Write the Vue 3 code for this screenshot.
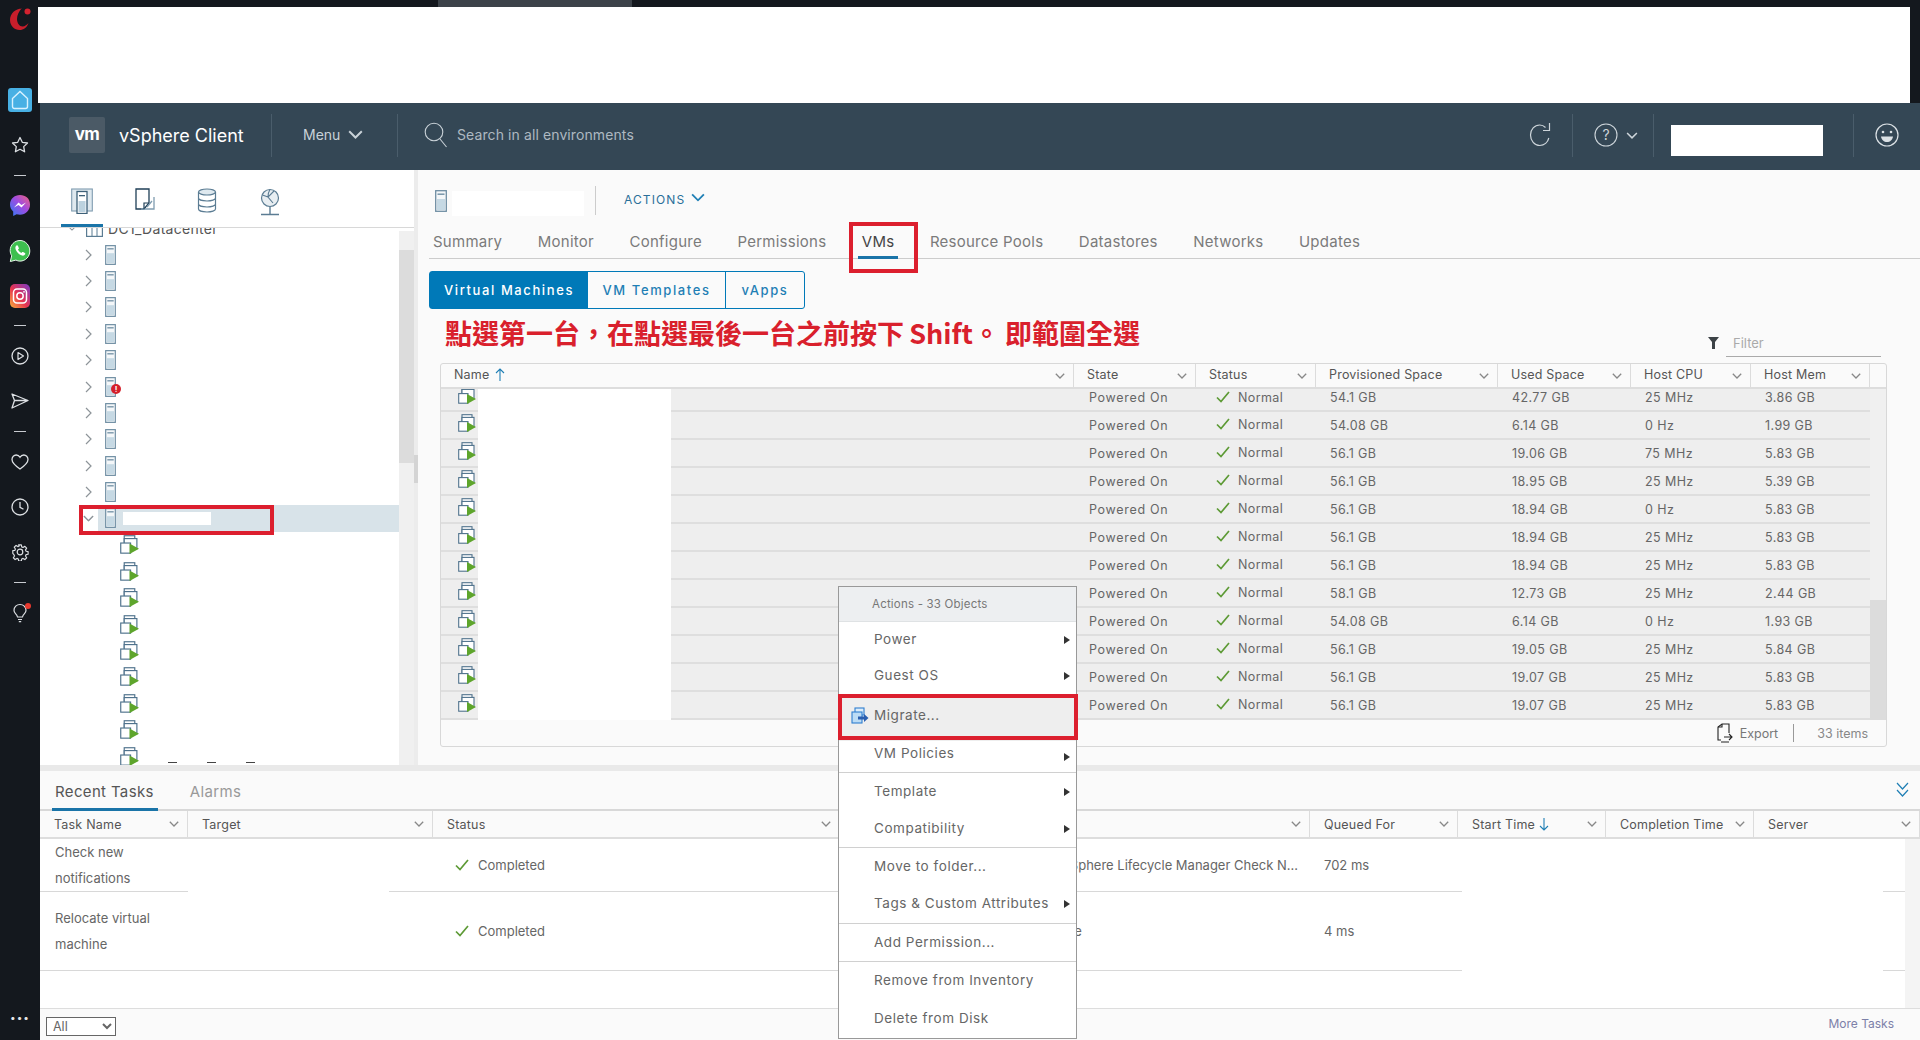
<template>
  <div class="screen">
    <!-- shared icons -->
    <svg class="defs" width="0" height="0">
      <symbol id="host" viewBox="0 0 12 22">
        <rect x="0.7" y="0.7" width="10.6" height="20.6" fill="#f4f7f9" stroke="#6f8ea3" stroke-width="1.3" />
        <rect x="2" y="9" width="8" height="11" fill="#c6d9e4" />
        <rect x="2.5" y="3.5" width="7" height="1.4" fill="#6f8ea3" />
      </symbol>
      <symbol id="vm" viewBox="0 0 18 18">
        <rect x="4" y="0.7" width="10" height="6" fill="#fff" stroke="#4f728c" stroke-width="1.1" />
        <rect x="4" y="3.4" width="12" height="9.6" fill="#fff" stroke="#4f728c" stroke-width="1.1" />
        <rect x="0.7" y="7.6" width="9.3" height="9.6" fill="#fff" stroke="#4f728c" stroke-width="1.1" />
        <path d="M9 8l9 5-9 5z" fill="#5ea52c" />
      </symbol>
      <symbol id="chev" viewBox="0 0 10 6">
        <path d="M.8.8L5 5l4.2-4.2" fill="none" stroke="currentColor" stroke-width="1.3" />
      </symbol>
      <symbol id="check" viewBox="0 0 14 12">
        <path d="M1 6.500l4 4L13 1" fill="none" stroke="#5d9a35" stroke-width="1.700" />
      </symbol>
    </svg>

    <div class="tabstrip"><span class="browser-tab"></span></div>

    <div class="shell">
      <aside class="sidebar">
        <div class="opera">
          <svg width="22" height="24" viewBox="0 0 22 24">
            <path d="M13 1.500C6.500 1.500 1 6.500 1 13c0 6 4.500 10 9.500 10 4 0 7.500-2.500 9-7-1.500 1.500-3.500 3.500-6 3.500-3 0-5.500-3.500-5.500-7.500 0-4 2-8 5-11z" fill="#c81e2b" />
            <circle cx="18.500" cy="4.500" r="3" fill="#d3222f" />
          </svg>
        </div>
        <div class="side-item">
          <span class="home-tile">
            <svg width="18" height="20" viewBox="0 0 18 20"><path d="M1.500 8.500L9 1.500l7.500 7v8a2 2 0 0 1-2 2h-11a2 2 0 0 1-2-2z" fill="none" stroke="#d9f2ff" stroke-width="1.400" /></svg>
          </span>
        </div>
        <div class="side-item">
          <svg width="18" height="18" viewBox="0 0 18 18"><path d="M9 1.500l2.300 4.800 5.200.7-3.800 3.600.9 5.200L9 13.300l-4.600 2.500.9-5.200L1.500 7l5.200-.7z" fill="none" stroke="#dcdfe3" stroke-width="1.300" stroke-linejoin="round" /></svg>
        </div>
        <div class="side-dash"></div>
        <div class="side-item">
          <svg width="22" height="23" viewBox="0 0 22 23">
            <defs><linearGradient id="msg" x1="0" y1="1" x2="1" y2="0"><stop offset="0" stop-color="#2f7bf6" /><stop offset=".55" stop-color="#a04be0" /><stop offset="1" stop-color="#f0647a" /></linearGradient></defs>
            <path d="M11 1C5.300 1 1 5.100 1 10.500c0 2.900 1.200 5.300 3.200 7V22l3.400-1.800c1 .3 2.200.5 3.400.5 5.700 0 10-4.200 10-10.200S16.700 1 11 1z" fill="url(#msg)" />
            <path d="M5 13.500l4.500-5 3 2.500 4.500-2.500-4.500 5-3-2.500z" fill="#fff" />
          </svg>
        </div>
        <div class="side-item">
          <svg width="22" height="24" viewBox="0 0 22 24">
            <path d="M11 1.500C5.500 1.500 1.200 6 1.200 11.500c0 2 .6 3.800 1.500 5.300L1.300 22.500l5.600-1.400c1.300.7 2.700 1 4.100 1 5.500 0 9.800-4.500 9.800-10.100S16.500 1.500 11 1.500z" fill="#3ec04f" stroke="#e8f7ea" stroke-width="1" />
            <path d="M7.500 6.500c-1.200 1-1.500 2.500-.6 4.400 1.200 2.500 3 4.300 5.500 5.400 1.700.7 3 .3 3.800-1 .3-.6.200-1-.3-1.300l-1.800-1c-.4-.2-.8-.1-1.100.3l-.6.700c-1.600-.7-2.800-1.900-3.500-3.400l.7-.6c.3-.3.4-.7.200-1.100l-.8-1.900c-.3-.6-1-.8-1.500-.5z" fill="#fff" />
          </svg>
        </div>
        <div class="side-item">
          <svg width="20" height="24" viewBox="0 0 20 24">
            <defs><linearGradient id="ig" x1="0" y1="1" x2="1" y2="0"><stop offset="0" stop-color="#f8b13c" /><stop offset=".45" stop-color="#e8344f" /><stop offset="1" stop-color="#7a3bc8" /></linearGradient></defs>
            <rect x="0" y="0" width="20" height="24" rx="5" fill="url(#ig)" />
            <rect x="3.500" y="5" width="13" height="14" rx="3.500" fill="none" stroke="#fff" stroke-width="1.500" />
            <circle cx="10" cy="12" r="3.200" fill="none" stroke="#fff" stroke-width="1.500" />
            <circle cx="14" cy="7.800" r=".9" fill="#fff" />
          </svg>
        </div>
        <div class="side-dash tight"></div>
        <div class="side-item">
          <svg width="18" height="20" viewBox="0 0 18 20"><circle cx="9" cy="10" r="8" fill="none" stroke="#dcdfe3" stroke-width="1.300" /><path d="M7 6.500l5.500 3.500L7 13.500z" fill="none" stroke="#dcdfe3" stroke-width="1.200" stroke-linejoin="round" /></svg>
        </div>
        <div class="side-item">
          <svg width="18" height="16" viewBox="0 0 18 16"><path d="M1 1l16 6.500L1 15l2.500-7.500zM3.500 7.500H17" fill="none" stroke="#dcdfe3" stroke-width="1.300" stroke-linejoin="round" /></svg>
        </div>
        <div class="side-dash"></div>
        <div class="side-item">
          <svg width="18" height="16" viewBox="0 0 18 16"><path d="M9 15C4 11.500 1 8.800 1 5.500 1 3 3 1 5.200 1 6.800 1 8.200 1.900 9 3.300 9.800 1.900 11.200 1 12.800 1 15 1 17 3 17 5.500c0 3.300-3 6-8 9.500z" fill="none" stroke="#dcdfe3" stroke-width="1.300" /></svg>
        </div>
        <div class="side-item">
          <svg width="18" height="18" viewBox="0 0 18 18"><circle cx="9" cy="9" r="8" fill="none" stroke="#dcdfe3" stroke-width="1.300" /><path d="M9 4v5.300l3.500 2" fill="none" stroke="#dcdfe3" stroke-width="1.300" /></svg>
        </div>
        <div class="side-item">
          <svg width="18" height="18" viewBox="0 0 18 18"><circle cx="9" cy="9" r="2.800" fill="none" stroke="#dcdfe3" stroke-width="1.200" /><path d="M7.500 1h3l.4 2.300 1.500.7 2-1.300 2 2-1.300 2 .7 1.500 2.200.3v3l-2.200.4-.7 1.500 1.300 2-2 2-2-1.300-1.500.7-.4 2.200h-3l-.4-2.200-1.500-.7-2 1.300-2-2 1.300-2-.7-1.500L1 10.500v-3l2.200-.3.700-1.500-1.300-2 2-2 2 1.300 1.500-.7z" transform="translate(.9 .9) scale(.9)" fill="none" stroke="#dcdfe3" stroke-width="1.300" stroke-linejoin="round" /></svg>
        </div>
        <div class="side-dash"></div>
        <div class="side-item bulb">
          <svg width="16" height="20" viewBox="0 0 16 20"><path d="M5.500 14c-.3-1.500-1-2.300-2-3.300C2.500 9.700 2 8.600 2 7.300 2 4 4.600 1.500 8 1.500s6 2.500 6 5.800c0 1.300-.5 2.400-1.500 3.400-1 1-1.700 1.800-2 3.300zM6 16.500h4M6.800 18.700h2.400" fill="none" stroke="#dcdfe3" stroke-width="1.200" /></svg>
          <span class="bulb-dot"></span>
        </div>
        <div class="side-dots">•••</div>
      </aside>

      <main class="main">
        <div class="banner"></div>

        <header class="topbar">
          <span class="vm-logo">vm</span>
          <span class="product">vSphere Client</span>
          <span class="top-div first"></span>
          <span class="menu-btn">Menu
            <svg width="15" height="9" viewBox="0 0 10 6"><use href="#chev" /></svg>
          </span>
          <span class="top-div"></span>
          <svg class="search-icon" width="24" height="26" viewBox="0 0 24 26"><circle cx="10" cy="10" r="8.800" fill="none" stroke="#c9d2d8" stroke-width="1.100" /><path d="M16 17l6.500 8" stroke="#c9d2d8" stroke-width="1.100" /></svg>
          <span class="search-text">Search in all environments</span>
          <svg class="refresh" width="24" height="26" viewBox="0 0 24 26"><path d="M17.500 5.500C15.800 3.800 14 3 11.800 3 6.500 3 2.500 7.500 2.500 13s4 10.500 9.300 10.500c4.500 0 8-3.200 9-7.500M21.500 1v7.500h-6.500" fill="none" stroke="#cdd5da" stroke-width="1.200" /></svg>
          <span class="top-div"></span>
          <svg class="help" width="24" height="24" viewBox="0 0 24 24"><circle cx="12" cy="12" r="11" fill="none" stroke="#cdd5da" stroke-width="1.100" /><text x="12" y="17" text-anchor="middle" class="help-q">?</text></svg>
          <svg class="help-chev" width="12" height="7" viewBox="0 0 10 6"><use href="#chev" /></svg>
          <span class="top-div"></span>
          <span class="user-mask"></span>
          <span class="top-div"></span>
          <svg class="smiley" width="24" height="24" viewBox="0 0 24 24"><circle cx="12" cy="12" r="11" fill="none" stroke="#dbe1e5" stroke-width="1.200" /><circle cx="8" cy="9" r="1.300" fill="#dbe1e5" /><circle cx="16" cy="9" r="1.300" fill="#dbe1e5" /><path d="M6 13.500h12c-.5 3.500-3 5.500-6 5.500s-5.500-2-6-5.500z" fill="#dbe1e5" /></svg>
        </header>

        <div class="work">
          <section class="tree-panel">
            <nav class="tree-tabs">
              <span class="tree-tab active">
                <svg width="22" height="26" viewBox="0 0 22 26"><rect x=".7" y="1" width="20.600" height="22" fill="#dfe9ef" stroke="#7f9cb0" stroke-width="1.100" /><rect x="6" y="3.500" width="10" height="22" fill="#fff" stroke="#3d6078" stroke-width="1.300" /><rect x="7.500" y="13" width="7" height="11" fill="#bcd2df" /><rect x="8" y="7" width="6" height="1.300" fill="#3d6078" /></svg>
              </span>
              <span class="tree-tab">
                <svg width="20" height="24" viewBox="0 0 20 24"><path d="M1 1h13v14l-5 6H1z" fill="#fff" stroke="#1f3f57" stroke-width="1.300" /><path d="M6 21h13V9" fill="none" stroke="#7f9cb0" stroke-width="1.300" /><path d="M9 21v-6h5" fill="none" stroke="#1f3f57" stroke-width="1.200" /><path d="M12 19l5-6" stroke="#7f9cb0" stroke-width="1.300" /></svg>
              </span>
              <span class="tree-tab">
                <svg width="20" height="25" viewBox="0 0 20 25"><ellipse cx="10" cy="4" rx="8.500" ry="3" fill="#dfe9ef" stroke="#5b7c93" stroke-width="1.200" /><path d="M1.500 4v17c0 1.700 3.800 3 8.500 3s8.500-1.300 8.500-3V4M1.500 10c0 1.700 3.800 3 8.500 3s8.500-1.300 8.500-3M1.500 16c0 1.700 3.800 3 8.500 3s8.500-1.300 8.500-3" fill="none" stroke="#5b7c93" stroke-width="1.200" /></svg>
              </span>
              <span class="tree-tab">
                <svg width="20" height="28" viewBox="0 0 20 28"><circle cx="10" cy="10" r="8.500" fill="#e8eef2" stroke="#5b7c93" stroke-width="1.200" /><path d="M14 3l-6 6 5 6M8 9L2.500 7M10 1.500c-2 3-2 6-2 7.500" fill="none" stroke="#5b7c93" stroke-width="1.100" /><path d="M10 18.500V26M1 26.500h18" stroke="#5b7c93" stroke-width="1.400" /></svg>
              </span>
            </nav>
            <div class="tree-body">
              <div class="tree-list">
                <div class="tree-row">
                  <svg class="chev-open small" width="8" height="5" viewBox="0 0 10 6"><use href="#chev" /></svg>
                  <svg class="dc-icon" width="17" height="18" viewBox="0 0 17 18"><rect x=".6" y=".6" width="15.800" height="16.800" fill="#fff" stroke="#5b7c93" stroke-width="1.200" /><path d="M6 1v16M11 1v16" stroke="#5b7c93" stroke-width="1" /></svg>
                  <span class="dc-name">DC1_Datacenter</span>
                </div>
                <div v-for="h in hosts" :key="h" class="tree-row">
                  <svg class="chev-closed" width="7" height="12" viewBox="0 0 7 12"><path d="M1 1l5 5-5 5" fill="none" stroke="#8d9499" stroke-width="1.200" /></svg>
                  <span class="host-wrap">
                    <svg width="11" height="20"><use href="#host" /></svg>
                    <span v-if="h === 6" class="err">!</span>
                  </span>
                </div>
                <div class="tree-row selected">
                  <svg class="chev-open" width="11" height="7" viewBox="0 0 10 6"><use href="#chev" /></svg>
                  <span class="host-wrap"><svg width="11" height="20"><use href="#host" /></svg></span>
                  <span class="sel-mask"></span>
                  <span class="red-box tree-mark"></span>
                </div>
                <div v-for="v in 9" :key="v" class="tree-row vm-row">
                  <svg width="19" height="19"><use href="#vm" /></svg>
                </div>
              </div>
              <!-- tops of the next, cut off row -->
              <div class="cut-row"><i></i><i></i><i></i></div>
              <div class="tree-scroll"><span class="tree-thumb"></span></div>
            </div>
          </section>

          <div class="vsplit"><span class="vsplit-grip"></span></div>

          <section class="content">
            <div class="obj-head">
              <svg class="obj-icon" width="12" height="24"><use href="#host" /></svg>
              <span class="obj-mask"></span>
              <span class="obj-div"></span>
              <span class="actions">ACTIONS</span>
              <svg class="actions-chev" width="14" height="9" viewBox="0 0 10 6"><use href="#chev" /></svg>
            </div>

            <nav class="tabs">
              <span v-for="t in tabs" :key="t" class="tab" :class="{ active: t === 'VMs' }">{{ t }}</span>
              <span class="red-box tab-mark"></span>
            </nav>

            <div class="toggle">
              <span class="toggle-btn on">Virtual Machines</span>
              <span class="toggle-btn tpl">VM Templates</span>
              <span class="toggle-btn app">vApps</span>
            </div>

            <div class="note-row">
              <span class="note" lang="zh-TW">點選第一台，在點選最後一台之前按下 Shift。 即範圍全選</span>
              <span class="filter">
                <svg class="funnel" width="11" height="12" viewBox="0 0 11 12"><path d="M0 0h11L7 5v7H4V5z" fill="#3c4246" /></svg>
                <span class="filter-box">Filter</span>
              </span>
            </div>

            <div class="grid">
              <div class="grid-head">
                <div class="gh name">Name
                  <svg class="sort" width="10" height="13" viewBox="0 0 10 13"><path d="M5 13V1M1 5l4-4 4 4" fill="none" stroke="#1f7fb5" stroke-width="1.100" /></svg>
                  <svg class="gh-chev" width="10" height="6"><use href="#chev" /></svg>
                </div>
                <div v-for="c in columns" :key="c" class="gh">{{ c }}
                  <svg class="gh-chev" width="10" height="6"><use href="#chev" /></svg>
                </div>
              </div>
              <div class="grid-body">
                <div class="rows">
                  <div v-for="(r, i) in rows" :key="i" class="row" :class="{ clip: i === 0 }">
                    <div class="cell vmc"><svg width="18" height="18"><use href="#vm" /></svg></div>
                    <div class="cell state">Powered On</div>
                    <div class="cell stat"><svg width="14" height="12"><use href="#check" /></svg>Normal</div>
                    <div class="cell">{{ r[0] }}</div>
                    <div class="cell">{{ r[1] }}</div>
                    <div class="cell">{{ r[2] }}</div>
                    <div class="cell">{{ r[3] }}</div>
                  </div>
                  <span class="name-mask"></span>
                </div>
                <div class="grid-scroll"><span class="grid-thumb"></span></div>
              </div>
              <div class="grid-foot">
                <svg width="17" height="20" viewBox="0 0 17 20"><path d="M5 17H2V4l4-3h7v9" fill="none" stroke="#222" stroke-width="1.100" /><path d="M2 4h4V1M5 19h8M8 14h8M13 11l3 3-3 3" fill="none" stroke="#222" stroke-width="1.100" /></svg>
                <span class="export">Export</span>
                <span class="foot-div"></span>
                <span class="count">33 items</span>
              </div>
            </div>
          </section>
        </div>

        <div class="hsplit"></div>

        <section class="bottom">
          <div class="b-tabs">
            <span class="b-tab active">Recent Tasks</span>
            <span class="b-tab">Alarms</span>
            <svg class="collapse" width="13" height="16" viewBox="0 0 13 16"><path d="M1 1l5.500 6L12 1M1 8l5.500 6L12 8" fill="none" stroke="#1f7fb5" stroke-width="1.200" /></svg>
          </div>
          <div class="t-head">
            <div v-for="c in taskColumns" :key="c" class="th">
              <span>{{ c }}</span>
              <svg v-if="c === 'Start Time'" class="sort" width="10" height="13" viewBox="0 0 10 13"><path d="M5 0v12M1 8l4 4 4-4" fill="none" stroke="#1f7fb5" stroke-width="1.100" /></svg>
              <svg class="gh-chev" width="10" height="6"><use href="#chev" /></svg>
            </div>
          </div>
          <div class="t-body">
            <div class="t-rows">
              <div v-for="t in tasks" :key="t.name" class="t-row" :class="t.cls">
                <div class="td task">{{ t.name }}</div>
                <div class="td"></div>
                <div class="td done"><svg width="14" height="12"><use href="#check" /></svg>Completed</div>
                <div class="td detail">{{ t.detail }}</div>
                <div class="td queued">{{ t.queued }}</div>
              </div>
              <span class="line-gap g1"></span>
              <span class="line-gap g2"></span>
              <span class="line-gap g3"></span>
            </div>
            <div class="t-scroll"></div>
          </div>
          <div class="b-foot">
            <select class="b-select"><option>All</option></select>
            <span class="more">More Tasks</span>
          </div>
        </section>
      </main>
    </div>

    <!-- context menu -->
    <div class="ctx">
      <div class="ctx-title">Actions - 33 Objects</div>
      <div class="ctx-group">
        <div class="ctx-item g-a">Power<i class="arrow"></i></div>
        <div class="ctx-item g-a">Guest OS<i class="arrow"></i></div>
      </div>
      <div class="ctx-group mig">
        <div class="ctx-item migrate">
          <svg class="mig-icon" width="18" height="17" viewBox="0 0 18 17">
            <rect x="4" y="1" width="9" height="7" fill="#dcecf9" stroke="#2f7fd0" stroke-width="1.100" />
            <rect x="1" y="5" width="10" height="11" fill="#bcdcf5" stroke="#2f7fd0" stroke-width="1.100" />
            <path d="M7 9.500h6V7l4.500 4-4.500 4v-2.500H7z" fill="#2a5fb0" />
          </svg>
          Migrate...
        </div>
        <div class="ctx-item policies">VM Policies<i class="arrow"></i></div>
        <span class="red-box mig-mark"></span>
      </div>
      <div class="ctx-group">
        <div class="ctx-item g-b">Template<i class="arrow"></i></div>
        <div class="ctx-item g-b">Compatibility<i class="arrow"></i></div>
      </div>
      <div class="ctx-group">
        <div class="ctx-item g-c">Move to folder...</div>
        <div class="ctx-item g-c">Tags &amp; Custom Attributes<i class="arrow"></i></div>
      </div>
      <div class="ctx-group">
        <div class="ctx-item g-d">Add Permission...</div>
      </div>
      <div class="ctx-group last">
        <div class="ctx-item g-e">Remove from Inventory</div>
        <div class="ctx-item g-e">Delete from Disk</div>
      </div>
    </div>
  </div>
</template>

<script setup>
const hosts = [1, 2, 3, 4, 5, 6, 7, 8, 9, 10]

const tabs = ['Summary', 'Monitor', 'Configure', 'Permissions', 'VMs', 'Resource Pools', 'Datastores', 'Networks', 'Updates']

const columns = ['State', 'Status', 'Provisioned Space', 'Used Space', 'Host CPU', 'Host Mem']

const rows = [
  ['54.1 GB', '42.77 GB', '25 MHz', '3.86 GB'],
  ['54.08 GB', '6.14 GB', '0 Hz', '1.99 GB'],
  ['56.1 GB', '19.06 GB', '75 MHz', '5.83 GB'],
  ['56.1 GB', '18.95 GB', '25 MHz', '5.39 GB'],
  ['56.1 GB', '18.94 GB', '0 Hz', '5.83 GB'],
  ['56.1 GB', '18.94 GB', '25 MHz', '5.83 GB'],
  ['56.1 GB', '18.94 GB', '25 MHz', '5.83 GB'],
  ['58.1 GB', '12.73 GB', '25 MHz', '2.44 GB'],
  ['54.08 GB', '6.14 GB', '0 Hz', '1.93 GB'],
  ['56.1 GB', '19.05 GB', '25 MHz', '5.84 GB'],
  ['56.1 GB', '19.07 GB', '25 MHz', '5.83 GB'],
  ['56.1 GB', '19.07 GB', '25 MHz', '5.83 GB']
]

const taskColumns = ['Task Name', 'Target', 'Status', '', 'Queued For', 'Start Time', 'Completion Time', 'Server']

const tasks = [
  { name: 'Check new notifications', detail: 'vSphere Lifecycle Manager Check N...', queued: '702 ms', cls: 'first' },
  { name: 'Relocate virtual machine', detail: 'Migrate', queued: '4 ms', cls: 'second' }
]
</script>

<style>
html, body {
  margin: 0;
  background: #14181e;
}
</style>

<style scoped>
.screen {
  position: relative;
  width: 1920px;
  height: 1040px;
  overflow: hidden;
  background: #14181e;
  font-family: Inter, "Noto Sans", sans-serif;
  font-size: 13px;
  color: #666;
}

.defs {
  position: absolute;
}

.tabstrip {
  height: 7px;
  overflow: hidden;
}

.browser-tab {
  display: block;
  width: 194px;
  height: 7px;
  margin-left: 438px;
  background: #3c4249;
}

.shell {
  display: flex;
  height: 1033px;
}

/* browser sidebar */
.sidebar {
  flex: 0 0 40px;
  display: flex;
  flex-direction: column;
  align-items: center;
}

.opera {
  height: 26px;
  margin-bottom: 44px;
}

.side-item {
  position: relative;
  flex: 0 0 45px;
  display: flex;
  align-items: center;
  justify-content: center;
}

.home-tile {
  width: 24px;
  height: 24px;
  background: #48b0e4;
  border-radius: 3px;
  display: flex;
  align-items: center;
  justify-content: center;
}

.side-dash {
  flex: 0 0 16px;
  width: 12px;
  background: linear-gradient(#c8cbd0, #c8cbd0) center / 12px 1px no-repeat;
}

.side-dash.tight {
  flex-basis: 15px;
}

.bulb-dot {
  position: absolute;
  top: 13px;
  right: -3px;
  width: 6px;
  height: 6px;
  border-radius: 50%;
  background: #e8392f;
}

.side-dots {
  margin-top: auto;
  height: 40px;
  line-height: 34px;
  font-size: 10px;
  letter-spacing: 1px;
  color: #e4e6e8;
}

.main {
  flex: 1;
  min-width: 0;
  display: flex;
  flex-direction: column;
}

.banner {
  flex: 0 0 96px;
  margin: 0 10px 0 -2px;
  background: #fff;
}

/* vsphere header */
.topbar {
  flex: 0 0 67px;
  box-sizing: border-box;
  display: flex;
  align-items: center;
  background: #344755;
  padding: 0 0 3px 29px;
}

.vm-logo {
  width: 36px;
  height: 36px;
  background: #4b5a66;
  border-radius: 2px;
  color: #fff;
  font-weight: 700;
  font-size: 17px;
  letter-spacing: -0.5px;
  line-height: 34px;
  text-align: center;
}

.product {
  margin-left: 14px;
  width: 125px;
  font-size: 18px;
  color: #fff;
  white-space: nowrap;
}

.top-div {
  width: 1px;
  height: 43px;
  background: #4a5d6b;
}

.top-div.first {
  margin-left: 27px;
}

.menu-btn {
  width: 125px;
  padding: 0 0 2px 31px;
  box-sizing: border-box;
  font-size: 14px;
  display: flex;
  align-items: center;
  gap: 8px;
  color: #c9d2d8;
}

.search-icon {
  margin-left: 26px;
}

.search-text {
  margin: 0 1px 2px 9px;
  width: 1070px;
  color: #aeb9c1;
  font-size: 14px;
  letter-spacing: .1px;
  white-space: nowrap;
}

.refresh {
  margin-right: 20px;
}

.help {
  margin-left: 21px;
}

.help-q {
  font-size: 14px;
  fill: #cdd5da;
}

.help-chev {
  margin: 0 15px 0 8px;
  color: #cdd5da;
}

.user-mask {
  width: 152px;
  height: 31px;
  margin: 11px 30px 0 17px;
  background: #fff;
}

.smiley {
  margin-left: 21px;
}

.work {
  flex: 0 0 595px;
  display: flex;
  min-height: 0;
}

/* inventory tree */
.tree-panel {
  flex: 0 0 374px;
  background: #fff;
  display: flex;
  flex-direction: column;
  min-height: 0;
}

.tree-tabs {
  flex: 0 0 58px;
  box-sizing: border-box;
  display: flex;
  padding-left: 21px;
  border-bottom: 1px solid #d8d8d8;
}

.tree-tab {
  position: relative;
  width: 42px;
  margin-right: 20.500px;
  display: flex;
  justify-content: center;
  padding-top: 18px;
  box-sizing: border-box;
}

.tree-tab.active::after {
  content: "";
  position: absolute;
  left: 0;
  right: 0;
  bottom: 0;
  height: 3px;
  background: #1a74a8;
}

.tree-body {
  position: relative;
  flex: 1;
  min-height: 0;
  overflow: hidden;
}

.tree-list {
  margin-top: -13px;
  width: 359px;
}

.tree-row {
  position: relative;
  height: 26.400px;
  display: flex;
  align-items: center;
  padding-left: 45px;
  box-sizing: border-box;
}

.chev-closed {
  flex: 0 0 7px;
  margin-right: 13px;
}

.chev-open {
  flex: 0 0 11px;
  margin-left: -2px;
  margin-right: 11px;
  color: #8d9499;
}

.chev-open.small {
  position: absolute;
  left: 28px;
  margin: 0;
}

.dc-icon {
  margin-left: 1px;
}

.dc-name {
  margin-left: 5px;
  color: #555;
  font-size: 14px;
  letter-spacing: .3px;
}

.host-wrap {
  position: relative;
  display: flex;
}

.err {
  position: absolute;
  right: -5px;
  bottom: 3px;
  width: 10px;
  height: 10px;
  border-radius: 50%;
  background: #d5202b;
  color: #fff;
  font-size: 8px;
  font-weight: 700;
  line-height: 10px;
  text-align: center;
}

.selected {
  background: linear-gradient(to right, transparent 58px, #d8e3e9 58px);
}

.sel-mask {
  width: 88px;
  height: 13px;
  margin-left: 7px;
  background: #fff;
}

.red-box {
  position: absolute;
  box-sizing: border-box;
  border: 4px solid #dc1f2e;
  pointer-events: none;
}

.tree-mark {
  left: 39px;
  top: 0;
  width: 195px;
  height: 30px;
}

.vm-row {
  padding-left: 80px;
}

.cut-row {
  position: absolute;
  left: 128px;
  bottom: 2px;
  display: flex;
  gap: 30px;
}

.cut-row i {
  width: 9px;
  height: 1px;
  background: #444;
}

.tree-scroll {
  position: absolute;
  top: 3px;
  right: 0;
  bottom: 0;
  width: 15px;
  background: #f0f0f0;
}

.tree-thumb {
  display: block;
  margin-top: 19px;
  height: 213px;
  background: #dcdcdc;
}

.vsplit {
  flex: 0 0 4px;
  background: #ececec;
}

.vsplit-grip {
  display: block;
  height: 28px;
  margin-top: 285px;
  background: #d4d4d4;
}

/* object content */
.content {
  flex: 1;
  min-width: 0;
  background: #fafafa;
  padding-left: 11px;
}

.obj-head {
  display: flex;
  align-items: center;
  height: 61px;
  padding: 21px 0 15px 6px;
  box-sizing: border-box;
}

.obj-icon {
  margin-top: -5px;
}

.obj-mask {
  width: 132px;
  height: 25px;
  margin-left: 5px;
  background: #fff;
}

.obj-div {
  width: 1px;
  height: 29px;
  margin-left: 11px;
  margin-top: -6px;
  background: #ccc;
}

.actions {
  margin-left: 28px;
  margin-top: -9px;
  font-size: 12px;
  letter-spacing: 1.100px;
  color: #2a6f99;
}

.actions-chev {
  margin-left: 6px;
  margin-top: -12px;
  color: #1f7fb5;
}

.tabs {
  position: relative;
  height: 28px;
  box-sizing: border-box;
  display: flex;
  gap: 35.500px;
  padding-left: 4px;
  border-bottom: 1px solid #ccc;
  line-height: 22px;
  font-size: 15px;
  letter-spacing: .25px;
}

.tab {
  position: relative;
  color: #7b7b7b;
  white-space: nowrap;
}

.tab.active {
  color: #444;
}

.tab.active::after {
  content: "";
  position: absolute;
  left: -4px;
  right: -4px;
  bottom: -1px;
  height: 3px;
  background: #1a74a8;
}

.tab-mark {
  left: 420px;
  top: -9px;
  width: 69px;
  height: 51px;
}

.toggle {
  display: flex;
  width: 376px;
  height: 38px;
  margin-top: 12px;
  box-sizing: border-box;
  border: 1px solid #0079b8;
  border-radius: 3px;
  font-size: 13px;
  font-weight: 500;
  letter-spacing: 1.600px;
  color: #1f7fb5;
}

.toggle-btn {
  display: flex;
  align-items: center;
  justify-content: center;
  white-space: nowrap;
}

.toggle-btn.on {
  width: 158px;
  background: #0079b8;
  color: #fff;
}

.toggle-btn.tpl {
  width: 137px;
  border-right: 1px solid #0079b8;
}

.toggle-btn.app {
  flex: 1;
}

.note-row {
  position: relative;
  height: 54px;
  padding-left: 16px;
}

.note {
  display: block;
  padding-top: 9px;
  font-family: "Noto Sans CJK TC", sans-serif;
  font-size: 27px;
  font-weight: 700;
  line-height: 30px;
  word-spacing: -1px;
  color: #d9202c;
  white-space: nowrap;
}

.filter {
  position: absolute;
  left: 1279px;
  top: 24px;
  display: flex;
  align-items: flex-start;
  gap: 13px;
}

.funnel {
  margin-top: 4px;
}

.filter-box {
  width: 155px;
  height: 24px;
  border-bottom: 1px solid #aaa;
  color: #aaa;
  margin-left: -6px;
  padding-left: 7px;
  box-sizing: border-box;
  line-height: 20px;
}

/* vm grid */
.grid {
  width: 1447px;
  height: 384px;
  margin-left: 11px;
  box-sizing: border-box;
  border: 1px solid #d8d8d8;
  border-radius: 3px;
  background: #fafafa;
  overflow: hidden;
}

.grid-head,
.row {
  display: grid;
  grid-template-columns: 633px 122px 120px 182px 133px 120px 119px;
  width: 1429px;
}

.grid-head {
  height: 25px;
  width: 1445px;
  grid-template-columns: 633px 122px 120px 182px 133px 120px 119px 16px;
  box-sizing: border-box;
  border-bottom: 2px solid #ddd;
}

.gh {
  position: relative;
  display: flex;
  align-items: center;
  padding: 0 0 2px 13px;
  border-right: 1px solid #dcdcdc;
  font-size: 12.500px;
  letter-spacing: .2px;
  color: #555;
  gap: 6px;
}

.gh-chev {
  position: absolute;
  right: 8px;
  top: 50%;
  margin-top: -3px;
  color: #888;
}

.grid-body {
  position: relative;
  height: 331px;
  display: flex;
}

.rows {
  position: relative;
  width: 1429px;
  height: 331px;
  overflow: hidden;
}

.row {
  height: 28px;
  box-sizing: border-box;
  background: #eee;
  border-bottom: 2px solid #dedede;
}

.row.clip {
  height: 23px;
}

.cell {
  display: flex;
  align-items: center;
  padding-left: 14px;
  font-size: 12.500px;
  letter-spacing: .4px;
  white-space: nowrap;
}

.cell.state {
  padding-left: 15px;
  letter-spacing: .7px;
}

.row.clip .cell {
  padding-bottom: 5px;
}

.row.clip .vmc {
  align-items: flex-start;
  overflow: hidden;
  padding-bottom: 0;
}

.row.clip .vmc svg {
  margin-top: -3px;
}

.vmc {
  padding: 0 0 5px 17px;
}

.stat {
  gap: 8px;
  padding-left: 20px;
  padding-bottom: 2px;
}

.name-mask {
  position: absolute;
  left: 37px;
  top: 0;
  width: 193px;
  height: 331px;
  background: #fff;
}

.grid-scroll {
  width: 16px;
  background: #f0f0f0;
  display: flex;
  align-items: flex-end;
}

.grid-thumb {
  width: 100%;
  height: 120px;
  background: #dcdcdc;
}

.grid-foot {
  height: 26px;
  display: flex;
  align-items: center;
  justify-content: flex-end;
  padding-right: 18px;
  font-size: 12.500px;
  color: #777;
}

.export {
  margin-left: 7px;
}

.foot-div {
  width: 1px;
  height: 18px;
  margin: 0 23px 0 15px;
  background: #999;
}

.count {
  color: #888;
}

.hsplit {
  flex: 0 0 6px;
  background: #e9e9e9;
}

/* recent tasks */
.bottom {
  flex: 1;
  min-height: 0;
  display: flex;
  flex-direction: column;
  background: #fafafa;
}

.b-tabs {
  flex: 0 0 40px;
  min-height: 0;
  box-sizing: border-box;
  position: relative;
  display: flex;
  gap: 36px;
  padding: 3px 0 0 15px;
  border-bottom: 2px solid #d8d8d8;
  font-size: 15px;
  line-height: 36px;
  letter-spacing: .35px;
  color: #999;
}

.b-tab.active {
  position: relative;
  color: #555;
}

.b-tab.active::after {
  content: "";
  position: absolute;
  left: -3px;
  right: -4px;
  bottom: -2px;
  height: 3px;
  background: #1a74a8;
}

.collapse {
  position: absolute;
  right: 11px;
  top: 11px;
}

.t-head {
  flex: 0 0 28px;
  box-sizing: border-box;
  display: grid;
  grid-template-columns: 148px 245px 407px 470px 148px 148px 148px 1fr;
  border-bottom: 2px solid #ddd;
}

.th {
  position: relative;
  display: flex;
  align-items: center;
  gap: 4px;
  padding-left: 14px;
  border-right: 1px solid #dcdcdc;
  font-size: 12.500px;
  letter-spacing: .2px;
  color: #555;
  white-space: nowrap;
}

.t-body {
  flex: 0 0 169px;
  display: flex;
  background: #fff;
  border-bottom: 1px solid #ddd;
}

.t-rows {
  position: relative;
  flex: 1;
  min-width: 0;
}

.t-row {
  display: grid;
  grid-template-columns: 148px 245px 407px 470px 148px;
  box-sizing: border-box;
  border-bottom: 1px solid #d8d8d8;
}

.t-row.first {
  height: 53px;
}

.t-row.second {
  height: 79px;
}

.td {
  font-size: 13px;
  color: #666;
  white-space: nowrap;
}

.task {
  white-space: normal;
  padding: 0 30px 0 15px;
  line-height: 26px;
}

.second .task {
  padding-top: 13px;
}

.done {
  display: flex;
  align-items: center;
  gap: 9px;
  padding-left: 22px;
}

.detail {
  display: flex;
  align-items: center;
  justify-content: flex-end;
  padding-right: 12px;
}

.second .detail {
  justify-content: flex-start;
  padding-left: 195px;
}

.queued {
  display: flex;
  align-items: center;
  padding-left: 14px;
}

.line-gap {
  position: absolute;
  height: 2px;
  background: #fff;
}

.g1 {
  left: 148px;
  width: 201px;
  top: 51px;
}

.g2 {
  left: 1422px;
  width: 421px;
  top: 51px;
}

.g3 {
  left: 1422px;
  width: 421px;
  top: 130px;
}

.t-scroll {
  flex: 0 0 15px;
  background: #f4f4f4;
}

.b-foot {
  flex: 1;
  min-height: 0;
  display: flex;
  align-items: center;
  justify-content: space-between;
  padding: 3px 26px 0 6px;
  box-sizing: border-box;
}

.b-select {
  width: 70px;
  height: 19px;
  padding: 0 2px;
  box-sizing: border-box;
  border: 1px solid #666;
  background: #fff;
  border-radius: 0;
  font-family: inherit;
  font-size: 12.500px;
  color: #666;
}

.more {
  margin-top: -6px;
  font-size: 12px;
  color: #7c80a8;
}

/* context menu */
.ctx {
  position: absolute;
  left: 838px;
  top: 586px;
  width: 239px;
  height: 453px;
  box-sizing: border-box;
  border: 1px solid #999;
  background: #fff;
  font-size: 13.500px;
  letter-spacing: .55px;
  color: #666;
}

.ctx-title {
  height: 35px;
  line-height: 34px;
  padding-left: 33px;
  background: #edeff1;
  border-bottom: 1px solid #dfe2e4;
  box-sizing: border-box;
  font-size: 11.500px;
  letter-spacing: .2px;
  color: #777;
}

.ctx-group {
  position: relative;
  border-bottom: 1px solid #d0d0d0;
}

.ctx-group.last {
  border-bottom: 0;
}

.ctx-item {
  position: relative;
  display: flex;
  align-items: center;
  padding: 0 0 2px 35px;
  box-sizing: border-box;
  white-space: nowrap;
}

.g-a { height: 36px; }
.g-b { height: 37px; }
.g-c { height: 37.500px; }
.g-d { height: 37px; }
.g-e { height: 38px; }

.migrate {
  height: 46px;
  padding-bottom: 6px;
  background: #eee;
}

.policies {
  height: 31px;
  padding-bottom: 8px;
}

.mig-icon {
  position: absolute;
  left: 12px;
  top: 12px;
}

.mig-mark {
  left: -1px;
  top: -1px;
  width: 240px;
  height: 46px;
}

.arrow {
  position: absolute;
  right: 6px;
  top: 50%;
  margin-top: -4px;
  border-left: 6px solid #333;
  border-top: 4px solid transparent;
  border-bottom: 4px solid transparent;
}
</style>
